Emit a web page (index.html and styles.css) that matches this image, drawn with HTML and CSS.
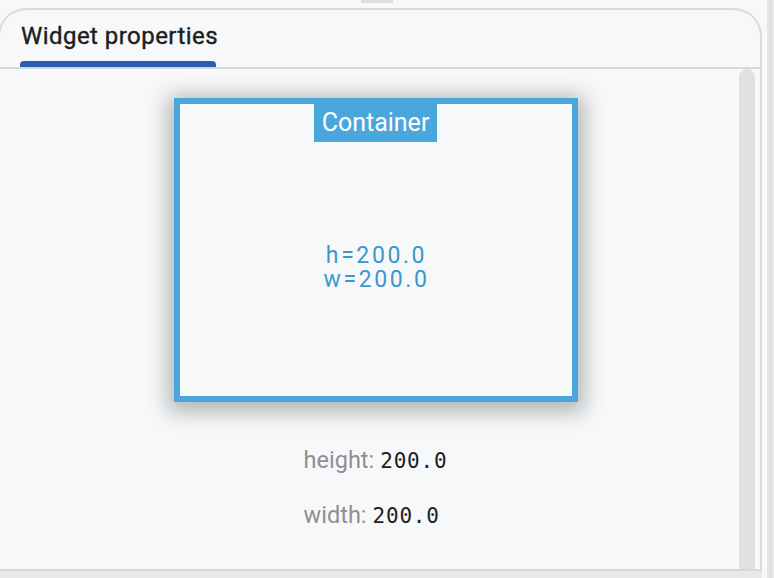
FILE: index.html
```html
<!DOCTYPE html>
<html>
<head>
<meta charset="utf-8">
<link rel="stylesheet" href="styles.css">
</head>
<body>
<div class="page">
  <div class="main">
    <div class="handle-row"><span class="handle"></span></div>
    <div class="panel">
      <div class="tabs">
        <div class="tab">Widget properties</div>
      </div>
      <div class="panel-body">
        <div class="content">
          <div class="box">
            <div class="box-label">Container</div>
            <div class="box-dims">h=200.0<br>w=200.0</div>
          </div>
          <div class="props">
            <div class="prop"><span class="prop-name">height:</span> <span class="prop-value">200.0</span></div>
            <div class="prop"><span class="prop-name">width:</span> <span class="prop-value">200.0</span></div>
          </div>
        </div>
        <div class="scroll-track"><div class="scroll-thumb"></div></div>
      </div>
    </div>
    <div class="footer"></div>
  </div>
  <div class="gap"></div>
  <div class="side"></div>
</div>
</body>
</html>
```
FILE: styles.css
```css
html, body {
  margin: 0;
  padding: 0;
  height: 100%;
  background: #f7f8fa;
  font-family: Roboto, "Liberation Sans", sans-serif;
  overflow: hidden;
}
.page {
  display: flex;
  height: 578px;
}
.main {
  width: 762px;
  display: flex;
  flex-direction: column;
}
.gap {
  width: 5px;
}
.side {
  flex: 1;
  background: linear-gradient(to right, #e6e7e9 0px, #dfe0e3 4px, #eceef0 100%);
}
.handle-row {
  height: 8px;
  display: flex;
}
.handle {
  margin-left: 361px;
  width: 32px;
  height: 3px;
  background: #dedfe1;
}
.panel {
  flex: 1;
  margin-left: -2px;
  border: 2px solid #d9dadc;
  border-bottom: none;
  border-radius: 28px 28px 0 0;
  display: flex;
  flex-direction: column;
  min-height: 0;
}
.tabs {
  height: 57px;
  border-bottom: 2px solid #d7d8db;
  display: flex;
  padding-left: 20px;
}
.tab {
  font-size: 24px;
  font-weight: 400;
  letter-spacing: 0.45px;
  -webkit-text-stroke: 0.4px #1d1e20;
  color: #1d1e20;
  white-space: nowrap;
  padding: 12px 0 0 1px;
  width: 195px;
  position: relative;
}
.tab::after {
  content: "";
  position: absolute;
  left: 0;
  right: 0;
  bottom: 0;
  height: 6px;
  background: #2b5db2;
  border-radius: 4px 4px 0 0;
}
.panel-body {
  flex: 1;
  display: flex;
  min-height: 0;
}
.content {
  flex: 1;
  padding: 29px 0 0 12px;
  display: flex;
  flex-direction: column;
  align-items: center;
}
.box {
  width: 392px;
  height: 292px;
  border: 6px solid #4aa7db;
  background: #f7f8fa;
  box-shadow: 0 4px 20px 6px rgba(0, 0, 0, 0.28);
  display: flex;
  flex-direction: column;
  align-items: center;
}
.box-label {
  background: #4aa7db;
  color: #ffffff;
  font-size: 25px;
  height: 38px;
  line-height: 37px;
  padding: 0 8px;
}
.box-dims {
  margin-top: 102px;
  color: #3a98cf;
  font-size: 23px;
  line-height: 24px;
  letter-spacing: 2.6px;
  text-align: center;
  padding-left: 2px;
}
.props {
  margin-top: 46px;
  display: flex;
  flex-direction: column;
  align-items: flex-start;
  gap: 29px;
}
.prop {
  font-size: 24px;
  line-height: 25px;
  white-space: nowrap;
}
.prop-name {
  color: #8e8f91;
  font-size: 23.5px;
}
.prop-value {
  font-family: "DejaVu Sans Mono", "Liberation Mono", monospace;
  font-size: 21px;
  color: #202124;
  letter-spacing: 0.8px;
}
.scroll-track {
  width: 16px;
  margin-right: 5px;
}
.scroll-thumb {
  height: 100%;
  background: #e1e1e2;
  border-radius: 8px 8px 0 0;
}
.footer {
  height: 7px;
  border-top: 2px solid #d7d8db;
  background: #e7e8ea;
}
```
